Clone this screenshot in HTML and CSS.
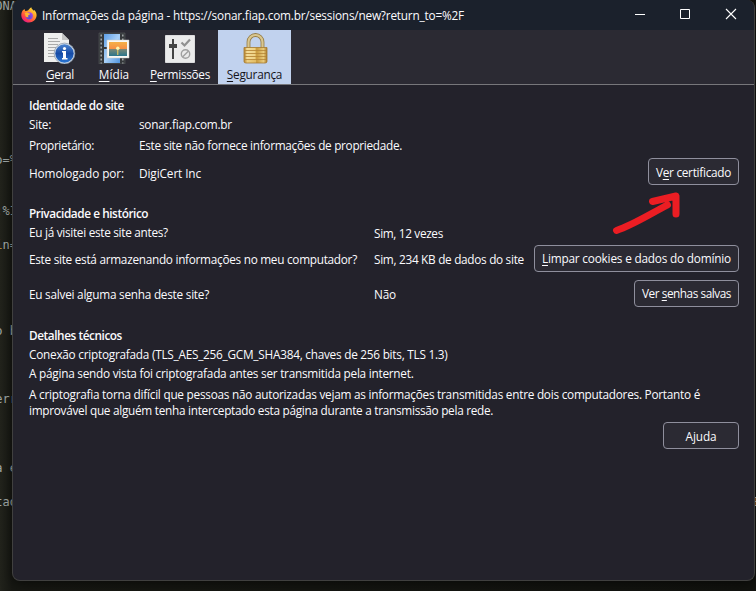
FILE: index.html
```
<!DOCTYPE html>
<html lang="pt-BR">
<head>
<meta charset="utf-8">
<title>Informações da página</title>
<link rel="stylesheet" href="styles.css">
</head>
<body>
<pre class="code">SONA








Do=%


c<i>:</i>%I

g<i>i</i>n=




xo b



terr



da e

etad</pre>
<span class="code-tail">E</span>
<main class="window">
  <header class="titlebar">
    <svg class="logo" viewBox="0 0 16 16">
      <defs>
        <linearGradient id="fire" x1="0.85" y1="0.05" x2="0.2" y2="0.95"><stop offset="0" stop-color="#ffe83d"/><stop offset=".4" stop-color="#ff9828"/><stop offset=".75" stop-color="#ff4447"/><stop offset="1" stop-color="#e4178a"/></linearGradient>
        <radialGradient id="globe" cx=".4" cy=".7" r=".7"><stop offset="0" stop-color="#5346cf"/><stop offset="1" stop-color="#a34bea"/></radialGradient>
      </defs>
      <path fill="url(#fire)" d="M1.7 3.6 3.5 2l.7 2 1.9-.2C8 3.5 8.100 1.300 10.300.2c.2 2 1.700 2.300 2.500 3.600l.6-.8c1.300 1.500 2.400 3.400 2.200 5.600-.3 4-3.500 7-7.600 7C3.700 15.600.5 12.500.3 8.500.2 6.600.8 5 1.700 3.600z"/>
      <circle cx="8.300" cy="8.800" r="3.600" fill="url(#globe)"/>
      <path fill="#ffb52e" d="M3.700 6.200c1.500-1.200 3-.8 4.200.1l1.300.4c-.1 1-1.500 1.100-2 1.700-.4.700.2 1.500 1 1.600-1.500.8-3.300 0-3.800-1.300-.2-.8.1-1.600-.7-2.500z"/>
    </svg>
    <h1 class="title k20">Informações da página - https://sonar.fiap.com.br/sessions/new?return_to=%2F</h1>
    <svg class="controls" viewBox="0 0 138 30"><path d="M19 14.500h10" stroke="#fff"/><path d="M64.500 9.500h9v9h-9z" fill="none" stroke="#fff" stroke-linejoin="round"/><path d="M110 9l10 10M120 9l-10 10" stroke="#fff" stroke-width="1.100"/></svg>
  </header>
  <nav class="toolbar">
    <a class="tab tab-general">
      <svg class="icon" viewBox="0 0 32 32">
        <defs><linearGradient id="info" x2="0" y2="1"><stop stop-color="#4b84d0"/><stop offset=".5" stop-color="#174ba6"/><stop offset="1" stop-color="#2b76d2"/></linearGradient></defs>
        <path fill="#efefee" d="M0 1h18l7 7v22H0z"/><path fill="#c4c4c4" d="M18 1v7h7z"/>
        <path stroke="#aaa" d="M4 6.500h10M4 9.500h12M4 12.500h10M4 15.500h8M4 18.500h7M4 21.500h7M4 24.500h8"/>
        <circle cx="20.500" cy="21.500" r="10.400" fill="#d4dde8" stroke="#8796a9" stroke-width=".7"/><circle cx="20.500" cy="21.500" r="9.200" fill="url(#info)"/>
        <circle cx="20.500" cy="16.500" r="1.600" fill="#fff"/><path fill="#fff" d="M18 19h4v7h1.500v1.500H18V26h1v-5.500h-1z"/>
      </svg>
      <span class="k30"><u>G</u>eral</span>
    </a>
    <a class="tab tab-media">
      <svg class="icon" viewBox="0 0 32 32">
        <defs><linearGradient id="sky" x2="0" y2="1"><stop stop-color="#f4b047"/><stop offset=".5" stop-color="#f78f45"/><stop offset=".52" stop-color="#7a8776"/><stop offset="1" stop-color="#2a768c"/></linearGradient><linearGradient id="film" x2="1" y2="1"><stop stop-color="#5e9ee7"/><stop offset=".5" stop-color="#a9d0f8"/><stop offset="1" stop-color="#5094df"/></linearGradient></defs>
        <path fill="#35383b" stroke="#5c6063" stroke-width=".5" d="M1 1h26v31H1z"/><path fill="url(#film)" d="M6 2h16v13H6zM6 17h16v14H6z"/>
        <path stroke="#a4a8aa" stroke-width="1.500" stroke-dasharray="2 2" d="M3.200 2.500v29M24.800 2.500v29"/>
        <path fill="#f8f8f5" stroke="#c9c9c6" stroke-width=".5" d="M9 8h22v18H9z"/><path fill="url(#sky)" d="M11 10h18v14H11z"/><circle cx="19.800" cy="16.300" r="1.700" fill="#fff6ad"/><path stroke="#f3d15e" d="M19.800 18v5"/>
      </svg>
      <span class="k00"><u>M</u>ídia</span>
    </a>
    <a class="tab tab-perm">
      <svg class="icon" viewBox="0 0 32 32">
        <path fill="#ebebeb" stroke="#fff" stroke-width=".7" d="M1.500 3.500h29v27h-29z"/>
        <path stroke="#444" stroke-width="2" d="M9 7v20"/><path fill="#444" d="M5 12h8v4H5z"/>
        <path fill="none" stroke="#909090" stroke-width="2.200" d="M17.500 10.500l3 3L26 7.500"/><circle cx="21.500" cy="22" r="4.200" fill="none" stroke="#a0a0a0" stroke-width="1.400"/><path stroke="#a0a0a0" stroke-width="1.400" d="M18.500 25l6-6"/>
      </svg>
      <span class="k30"><u>P</u>ermissões</span>
    </a>
    <a class="tab tab-security">
      <svg class="icon" viewBox="0 0 32 32">
        <defs><linearGradient id="gold"><stop stop-color="#b78632"/><stop offset=".15" stop-color="#edcf82"/><stop offset=".5" stop-color="#e2bd65"/><stop offset=".55" stop-color="#c99a3d"/><stop offset=".85" stop-color="#e9cb7c"/><stop offset="1" stop-color="#a97928"/></linearGradient></defs>
        <path fill="none" stroke="#937b45" stroke-width="3.800" d="M9.500 16V10a7 7 0 0 1 14 0v6"/><path fill="none" stroke="#d9c68f" stroke-width="2.200" d="M9.500 16V10a7 7 0 0 1 14 0v6"/>
        <path fill="url(#gold)" stroke="#a47a30" stroke-width=".8" d="M5 15.500h23v14q0 1.500-2 1.500H7q-2 0-2-1.500z"/>
        <path stroke="#b48436" stroke-width=".8" d="M6 18.500h21M6 21.500h21M6 24.500h21M6 27.500h21"/><path stroke="#fff0b8" d="M7 17h9M7 20h9M7 23h9M7 26h9" opacity=".8"/>
      </svg>
      <span class="k25"><u>S</u>egurança</span>
    </a>
  </nav>
  <div class="panel">
    <section class="identity">
      <h2>Identidade do site</h2>
      <div class="pair site"><span>Site:</span><span class="k25">sonar.fiap.com.br</span></div>
      <div class="pair owner"><span class="k34">Proprietário:</span><span class="k30">Este site não fornece informações de propriedade.</span></div>
      <div class="pair verifier"><span class="k10">Homologado por:</span><span class="k10">DigiCert Inc</span><button class="b-cert">V<u>e</u>r certificado</button></div>
    </section>
    <section class="privacy">
      <h2>Privacidade e histórico</h2>
      <div class="answer visited"><span class="k30">Eu já visitei este site antes?</span><span class="value k34">Sim, 12 vezes</span></div>
      <div class="answer stored"><span>Este site está armazenando informações no meu computador?</span><span class="k30">Sim, 234 KB de dados do site</span><button class="b-cookies k20"><u>L</u>impar cookies e dados do domínio</button></div>
      <div class="answer passwords"><span class="k25">Eu salvei alguma senha deste site?</span><span class="k20">Não</span><button class="b-pass k43">Ver <u>s</u>enhas salvas</button></div>
    </section>
    <section class="technical">
      <h2>Detalhes técnicos</h2>
      <p class="k25">Conexão criptografada (TLS_AES_256_GCM_SHA384, chaves de 256 bits, TLS 1.3)</p>
      <p class="k25">A página sendo vista foi criptografada antes ser transmitida pela internet.</p>
      <p class="long"><span class="k25">A criptografia torna difícil que pessoas não autorizadas vejam as informações transmitidas entre dois computadores. Portanto é</span><br>improvável que alguém tenha interceptado esta página durante a transmissão pela rede.</p>
    </section>
    <button class="help k10">Ajuda</button>
  </div>
</main>
<svg class="arrow" viewBox="0 0 70 44"><path d="M4.500 38.500C21 33 38 22 55.500 13M40.500 9.500 64 4v18" fill="none" stroke="#eb1d23" stroke-width="7" stroke-linecap="round" stroke-linejoin="round"/></svg>
</body>
</html>
```
FILE: styles.css
```
* { box-sizing: border-box; }
body { margin: 0; width: 756px; height: 591px; overflow: hidden; position: relative; background: linear-gradient(90deg, #22231c, #171813 12px, #12130f); font: 11.8px/16px "Open Sans", sans-serif; letter-spacing: -.282px; color: #fbfbfe; }
h1, h2, p, pre { margin: 0; font-size: inherit; font-weight: inherit; }
u { text-underline-offset: 2px; text-decoration-thickness: 1px; }
.k00 { letter-spacing: 0; }
.k10 { letter-spacing: -.1px; }
.k20 { letter-spacing: -.196px; }
.k25 { letter-spacing: -.249px; }
.k30 { letter-spacing: -.297px; }
.k34 { letter-spacing: -.338px; }
.k43 { letter-spacing: -.45px; }
.code { position: absolute; left: -12px; top: -2px; letter-spacing: 0; font: 12px/17.1px "DejaVu Sans Mono", monospace; color: #a3aaa8; }
.code i { font-style: normal; color: #c09a3c; }
.code-tail { position: absolute; left: 753px; top: 494px; font: 12px/17px "DejaVu Sans Mono", monospace; color: #b5b5ac; }
.window { position: relative; width: 743px; height: 581px; margin-left: 12px; border: 1px solid #40403f; border-top: 0; border-radius: 8px; overflow: hidden; background: #23222b; box-shadow: 0 3px 12px #0008; }
.titlebar { height: 30px; background: #1b212c; display: flex; align-items: center; padding-left: 8px; }
.logo { width: 16px; height: 16px; margin: 0 5px 1px 0; }
.title { white-space: nowrap; }
.controls { width: 138px; height: 30px; margin-left: auto; }
.toolbar { height: 55px; display: flex; background: #2b2a33; border-bottom: 1px solid #77777b; padding-left: 22px; }
.tab { display: flex; flex-direction: column; align-items: center; height: 54px; padding-top: 2px; white-space: nowrap; }
.icon { width: 32px; height: 32px; display: block; margin-bottom: 2px; }
.tab-general { width: 50px; margin-right: 1px; }
.tab-media { width: 56px; }
.tab-perm { width: 76px; }
.tab-security { width: 73px; background: #c1d2ee; color: #15141a; }
.panel { padding: 12px 15px 0 16px; display: flex; flex-direction: column; white-space: nowrap; }
h2 { height: 16px; font-weight: 600; letter-spacing: -.43px; }
.pair, .answer { display: flex; align-items: center; }
.pair > span:first-child { width: 110px; }
.answer > span:first-child { width: 345px; }
button { height: 27px; margin: 0 0 0 auto; padding: 0; border: 1px solid #8f8f9d; border-radius: 4px; background: #2b2a33; color: inherit; font: inherit; letter-spacing: -.282px; }
button.k10 { letter-spacing: -.1px; }
button.k20 { letter-spacing: -.196px; }
button.k43 { letter-spacing: -.45px; }
.pair button, .answer button { margin-bottom: 2px; }
.b-cert { width: 91px; }
.b-cookies { width: 205px; }
.b-pass { width: 105px; }
.help { width: 76px; margin-top: 4px; }
.site { height: 21px; }
.owner { height: 21px; }
.verifier { height: 35px; }
.privacy { margin-top: 15px; }
.visited { height: 22px; }
.visited .value { padding-top: 1px; }
.stored { height: 32px; }
.passwords { height: 38px; }
.technical { margin-top: 14px; }
.technical p { height: 19px; padding-top: 3px; }
.technical .long { height: 37px; padding-top: 5px; }
.arrow { position: absolute; left: 612px; top: 192px; width: 70px; height: 44px; }
```
